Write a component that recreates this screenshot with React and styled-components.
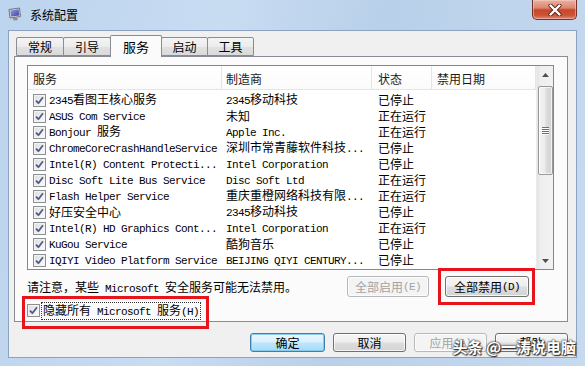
import React from 'react';
import styled, { createGlobalStyle } from 'styled-components';

const CJK = `"Noto Sans CJK SC", "Noto Sans", sans-serif`;

const GlobalStyle = createGlobalStyle`
  html, body { margin: 0; padding: 0; background: #fff; }
  body { font-family: ${CJK}; font-size: 12px; color: #000; }
  * { box-sizing: border-box; }
`;

const Latin = styled.span`
  font-family: "Liberation Mono", monospace;
  font-size: 11px;
  letter-spacing: -0.6px;
`;

function Mixed({ text }) {
  const parts = text.split(/([\x20-\x7e]+)/);
  return parts.map((p, i) =>
    p === '' ? null : /^[\x20-\x7e]+$/.test(p) ? (
      <Latin key={i}>{p}</Latin>
    ) : (
      <React.Fragment key={i}>{p}</React.Fragment>
    )
  );
}

const Frame = styled.div`
  position: relative;
  width: 585px;
  height: 366px;
  display: flex;
  flex-direction: column;
  padding: 0 8px 8px 8px;
  background: linear-gradient(100deg, #bdd4ee 0%, #c8dcf2 35%, #b9d0ea 60%, #c6daf0 100%);
  overflow: hidden;
`;

const TitleBar = styled.div`
  height: 30px;
  display: flex;
  align-items: flex-start;
  flex: none;
`;

const AppIcon = styled.svg`
  width: 14px;
  height: 14px;
  margin-top: 7px;
  flex: none;
`;

const Title = styled.div`
  margin-left: 8px;
  margin-top: 6px;
  font-size: 12px;
  line-height: 18px;
  color: #000;
  flex: 1;
`;

const CloseBtn = styled.div`
  width: 45px;
  height: 20px;
  flex: none;
  display: flex;
  align-items: center;
  justify-content: center;
  border: 1px solid #6f3328;
  border-top: none;
  border-radius: 0 0 5px 5px;
  background: linear-gradient(#eab1a2 0%, #dc8570 42%, #c8462c 52%, #cc5337 80%, #dc8a72 100%);
  box-shadow: inset 0 0 0 1px rgba(255, 220, 210, 0.45);
`;

const Client = styled.div`
  flex: 1;
  display: flex;
  flex-direction: column;
  background: #f0f0f0;
  border: 1px solid #8ba3c0;
  padding: 4px 8px 0 5px;
`;

const TabRow = styled.div`
  display: flex;
  align-items: flex-end;
  height: 22px;
  padding-left: 2px;
  margin-bottom: -1px;
  position: relative;
  z-index: 1;
`;

const Tab = styled.div`
  width: ${(p) => p.$w}px;
  height: ${(p) => (p.$active ? 22 : 19)}px;
  margin-bottom: ${(p) => (p.$active ? 0 : 1)}px;
  margin-left: -1px;
  &:first-child { margin-left: 0; }
  display: flex;
  align-items: center;
  justify-content: center;
  font-size: ${(p) => (p.$active ? 13 : 12)}px;
  line-height: 16px;
  padding-top: ${(p) => (p.$active ? 0 : 1)}px;
  border: 1px solid #898c95;
  border-bottom: ${(p) => (p.$active ? 'none' : '1px solid #898c95')};
  border-radius: 2px 2px 0 0;
  background: ${(p) =>
    p.$active ? '#fbfbfb' : 'linear-gradient(#f4f4f4 0%, #ececec 50%, #e1e1e1 51%, #dadada 100%)'};
  position: relative;
  z-index: ${(p) => (p.$active ? 2 : 1)};
`;

const Panel = styled.div`
  height: 266px;
  flex: none;
  display: flex;
  flex-direction: column;
  border: 1px solid #898c95;
  background: #fbfbfb;
  padding: 8px 13px 2px 12px;
`;

const ListBox = styled.div`
  height: 205px;
  flex: none;
  display: flex;
  border: 1px solid #828790;
  background: #fff;
`;

const ListMain = styled.div`
  flex: 1;
  display: flex;
  flex-direction: column;
  overflow: hidden;
`;

const Header = styled.div`
  height: 24px;
  display: flex;
  flex: none;
  border-bottom: 1px solid #e5e5e5;
  background: linear-gradient(#ffffff, #fbfbfb);
`;

const HeadCell = styled.div`
  width: ${(p) => (p.$w ? `${p.$w}px` : 'auto')};
  flex: ${(p) => (p.$w ? 'none' : '1')};
  padding-left: ${(p) => p.$pad}px;
  padding-top: 2px;
  display: flex;
  align-items: center;
  border-right: 1px solid #e3e5e8;
  color: #1a1a1a;
  font-size: 12px;
  white-space: nowrap;
`;

const Rows = styled.div`
  padding-top: 2px;
  display: flex;
  flex-direction: column;
`;

const Row = styled.div`
  height: 16px;
  display: flex;
  align-items: center;
`;

const Cell = styled.div`
  width: ${(p) => (p.$w ? `${p.$w}px` : 'auto')};
  flex: ${(p) => (p.$w ? 'none' : '1')};
  padding-left: ${(p) => p.$pad}px;
  display: flex;
  align-items: center;
  gap: 3px;
  white-space: nowrap;
  overflow: hidden;
  font-size: 12px;
  line-height: 16px;
`;

const CheckBox = styled.span`
  width: 13px;
  height: 13px;
  flex: none;
  display: inline-flex;
  align-items: center;
  justify-content: center;
  border: 1px solid #8e8f8f;
  background: linear-gradient(135deg, #dcdcdc 0%, #f0f0f0 60%, #fcfcfc 100%);
  box-shadow: inset 0 0 0 1px #f4f4f4;
`;

const ScrollBar = styled.div`
  width: 17px;
  flex: none;
  display: flex;
  flex-direction: column;
  align-items: center;
  background: linear-gradient(to right, #e4e4e4 0%, #efefef 25%, #f2f2f2 100%);
  border-left: 1px solid #ebebeb;
`;

const ScrollBtn = styled.div`
  width: 16px;
  height: 17px;
  flex: none;
  display: flex;
  align-items: center;
  justify-content: center;
`;

const Thumb = styled.div`
  width: 15px;
  height: 89px;
  margin-top: 3px;
  border: 1px solid #989898;
  border-radius: 2px;
  background: linear-gradient(to right, #f4f4f4 0%, #ebebeb 45%, #dcdcdc 55%, #d2d2d2 100%);
  box-shadow: inset 0 0 0 1px rgba(255, 255, 255, 0.7);
  display: flex;
  flex-direction: column;
  align-items: center;
  justify-content: center;
  gap: 1px;
`;

const Grip = styled.span`
  width: 7px;
  height: 1px;
  background: #6f6f6f;
  box-shadow: 0 1px 0 #fafafa;
`;

const Spacer = styled.div`
  flex: 1;
`;

const NoteRow = styled.div`
  height: 21px;
  margin-top: 6px;
  padding-right: 25px;
  display: flex;
  align-items: center;
  gap: 16px;
  flex: none;
`;

const Note = styled.div`
  flex: 1;
  white-space: nowrap;
  font-size: 12px;
`;

const Button = styled.button`
  width: ${(p) => p.$w}px;
  height: ${(p) => p.$h}px;
  padding: 0;
  flex: none;
  font-family: ${CJK};
  font-size: 12px;
  line-height: 16px;
  color: ${(p) => (p.disabled ? '#a3a3a3' : '#000')};
  border: 1px solid ${(p) => (p.$default ? '#3c7fb1' : p.disabled ? '#b5b9bc' : '#707070')};
  border-radius: 3px;
  background: ${(p) =>
    p.disabled
      ? '#f4f4f4'
      : p.$default
      ? 'linear-gradient(#eaf6fd 0%, #d9f0fc 48%, #bee6fd 52%, #a7d9f5 100%)'
      : 'linear-gradient(#f6f6f6 0%, #eeeeee 48%, #dedede 52%, #d3d3d3 100%)'};
  box-shadow: inset 0 0 0 1px ${(p) => (p.$default ? 'rgba(130,200,240,0.9)' : 'rgba(255,255,255,0.75)')};
  display: flex;
  align-items: center;
  justify-content: center;
`;

const Highlight = styled.div`
  position: relative;
  display: flex;
  align-items: center;
  &::after {
    content: '';
    position: absolute;
    top: ${(p) => p.$t}px;
    left: ${(p) => p.$l}px;
    right: ${(p) => p.$r}px;
    bottom: ${(p) => p.$b}px;
    border: 3px solid #e8141c;
    pointer-events: none;
  }
`;

const HideRow = styled.div`
  height: 17px;
  margin-top: 5px;
  display: flex;
  align-items: center;
  flex: none;
`;

const FocusLabel = styled.span`
  margin-left: 1px;
  padding: 0 1px;
  border: 1px dotted #333;
  line-height: 14px;
  font-size: 12px;
  white-space: nowrap;
`;

const ButtonRow = styled.div`
  margin-top: 11px;
  display: flex;
  justify-content: flex-end;
  gap: 8px;
`;

const Watermark = styled.div`
  position: absolute;
  right: 9px;
  bottom: 10px;
  font-family: ${CJK};
  font-size: 15px;
  font-weight: 700;
  line-height: 18px;
  color: #fff;
  text-shadow: 0 0 2px #333, 0 0 2px #333, 1px 1px 1px #222;
  white-space: nowrap;
`;

const Check = () => (
  <CheckBox>
    <svg width="9" height="9" viewBox="0 0 9 9">
      <path d="M1 4.6 L3.4 7.2 L8 1.2" fill="none" stroke="#4a5d8f" strokeWidth="1.8" strokeLinejoin="round" />
    </svg>
  </CheckBox>
);

const cols = [
  { w: 194, pad: 5 },
  { w: 150, pad: 4 },
  { w: 60, pad: 6 },
  { w: null, pad: 5 },
];

const headers = ['服务', '制造商', '状态', '禁用日期'];

const rows = [
  ['2345看图王核心服务', '2345移动科技', '已停止'],
  ['ASUS Com Service', '未知', '正在运行'],
  ['Bonjour 服务', 'Apple Inc.', '正在运行'],
  ['ChromeCoreCrashHandleService', '深圳市常青藤软件科技...', '已停止'],
  ['Intel(R) Content Protecti...', 'Intel Corporation', '已停止'],
  ['Disc Soft Lite Bus Service', 'Disc Soft Ltd', '正在运行'],
  ['Flash Helper Service', '重庆重橙网络科技有限...', '正在运行'],
  ['好压安全中心', '2345移动科技', '已停止'],
  ['Intel(R) HD Graphics Cont...', 'Intel Corporation', '正在运行'],
  ['KuGou Service', '酷狗音乐', '已停止'],
  ['IQIYI Video Platform Service', 'BEIJING QIYI CENTURY...', '已停止'],
];

const tabs = [
  { label: '常规', w: 48 },
  { label: '引导', w: 48 },
  { label: '服务', w: 52, active: true },
  { label: '启动', w: 47 },
  { label: '工具', w: 47 },
];

export default function App() {
  return (
    <>
      <GlobalStyle />
      <Frame>
        <TitleBar>
          <AppIcon viewBox="0 0 14 14">
            <defs>
              <linearGradient id="scr" x1="0" y1="0" x2="1" y2="1">
                <stop offset="0" stopColor="#8fa0e6" />
                <stop offset="1" stopColor="#3b3fa0" />
              </linearGradient>
            </defs>
            <path d="M1 2.5 L11.5 1 L12.5 9.5 L2 11 Z" fill="#d8d8dc" stroke="#5a5a66" strokeWidth="0.8" />
            <path d="M2.4 3.4 L10.6 2.3 L11.3 8.4 L3.1 9.6 Z" fill="url(#scr)" />
            <path d="M5 11 L9 10.5 L10 13 L5.5 13.5 Z" fill="#8c8c96" />
          </AppIcon>
          <Title>系统配置</Title>
          <CloseBtn>
            <svg width="14" height="12" viewBox="0 0 14 12">
              <path d="M2.5 1.5 L11.5 10.5 M11.5 1.5 L2.5 10.5" stroke="#5a1f16" strokeWidth="4" strokeLinecap="round" />
              <path d="M2.5 1.5 L11.5 10.5 M11.5 1.5 L2.5 10.5" stroke="#ffffff" strokeWidth="2.4" strokeLinecap="round" />
            </svg>
          </CloseBtn>
        </TitleBar>
        <Client>
          <TabRow>
            {tabs.map((t) => (
              <Tab key={t.label} $w={t.w} $active={t.active}>
                {t.label}
              </Tab>
            ))}
          </TabRow>
          <Panel>
            <ListBox>
              <ListMain>
                <Header>
                  {headers.map((h, i) => (
                    <HeadCell key={h} $w={cols[i].w} $pad={cols[i].pad}>
                      {h}
                    </HeadCell>
                  ))}
                </Header>
                <Rows>
                  {rows.map((r) => (
                    <Row key={r[0]}>
                      <Cell $w={cols[0].w} $pad={cols[0].pad}>
                        <Check />
                        <span><Mixed text={r[0]} /></span>
                      </Cell>
                      <Cell $w={cols[1].w} $pad={cols[1].pad}>
                        <span><Mixed text={r[1]} /></span>
                      </Cell>
                      <Cell $w={cols[2].w} $pad={cols[2].pad}>
                        {r[2]}
                      </Cell>
                      <Cell $pad={cols[3].pad} />
                    </Row>
                  ))}
                </Rows>
              </ListMain>
              <ScrollBar>
                <ScrollBtn>
                  <svg width="7" height="4" viewBox="0 0 7 4">
                    <path d="M0 4 L3.5 0 L7 4 Z" fill="#4f4f4f" />
                  </svg>
                </ScrollBtn>
                <Thumb>
                  <Grip />
                  <Grip />
                  <Grip />
                  <Grip />
                </Thumb>
                <Spacer />
                <ScrollBtn>
                  <svg width="7" height="4" viewBox="0 0 7 4">
                    <path d="M0 0 L7 0 L3.5 4 Z" fill="#4f4f4f" />
                  </svg>
                </ScrollBtn>
              </ScrollBar>
            </ListBox>
            <NoteRow>
              <Note>
                <Mixed text="请注意，某些 Microsoft 安全服务可能无法禁用。" />
              </Note>
              <Button $w={82} $h={21} disabled>
                <Mixed text="全部启用(E)" />
              </Button>
              <Highlight $t={-8} $l={-7} $r={-6} $b={-8}>
                <Button $w={84} $h={21}>
                  <Mixed text="全部禁用(D)" />
                </Button>
              </Highlight>
            </NoteRow>
            <HideRow>
              <Highlight $t={-6} $l={-5} $r={-8} $b={-9}>
                <Check />
                <FocusLabel>
                  <Mixed text="隐藏所有 Microsoft 服务(H)" />
                </FocusLabel>
              </Highlight>
            </HideRow>
          </Panel>
          <ButtonRow>
            <Button $w={75} $h={19} $default>确定</Button>
            <Button $w={73} $h={19}>取消</Button>
            <Button $w={73} $h={19} disabled>
              <Mixed text="应用(A)" />
            </Button>
            <Button $w={73} $h={19}>帮助</Button>
          </ButtonRow>
        </Client>
        <Watermark>头条 @一涛说电脑</Watermark>
      </Frame>
    </>
  );
}
